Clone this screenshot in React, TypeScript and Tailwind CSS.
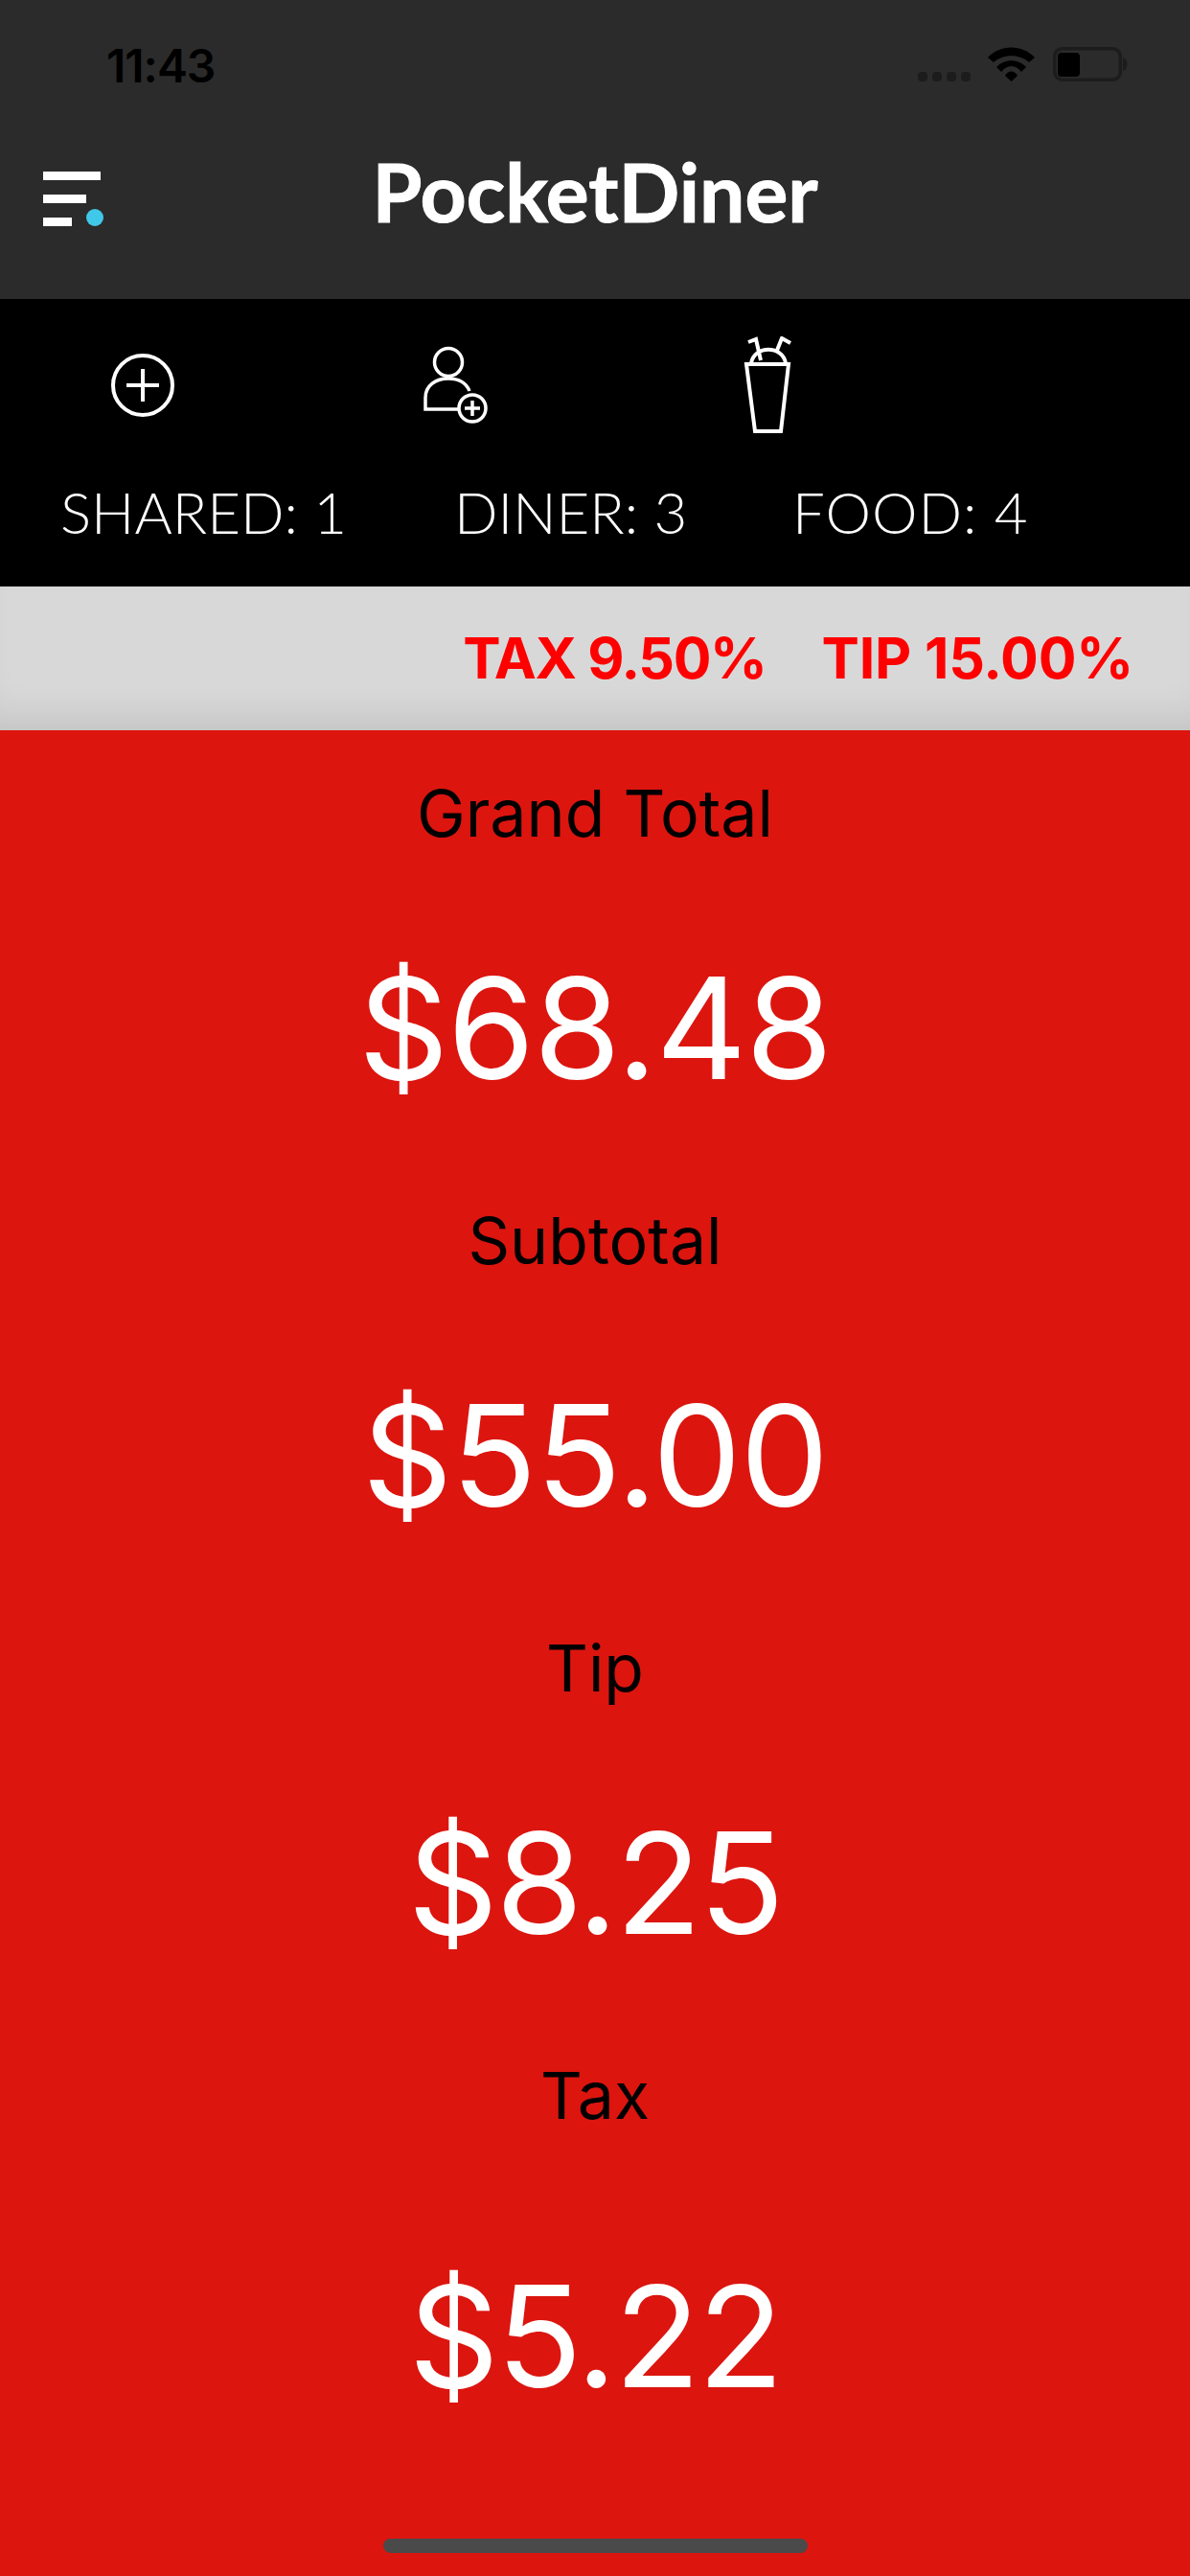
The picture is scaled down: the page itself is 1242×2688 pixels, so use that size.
import React from 'react'

const totals = [
  { label: 'Grand Total', value: '$68.48', valueClass: 'mt-[109px] tracking-[-1.2px]' },
  { label: 'Subtotal', value: '$55.00', valueClass: 'mt-[109px] tracking-[-1.2px]' },
  { label: 'Tip', value: '$8.25', valueClass: 'mt-[109px] tracking-[-2.5px]' },
  { label: 'Tax', value: '$5.22', valueClass: 'mt-[136px] tracking-[-2.5px]' }
]

function StatusIcons() {
  return (
    <svg width="240" height="40" viewBox="0 0 240 40" className="block">
      <g fill="#1c1c1c">
        <rect x="0" y="28" width="10" height="10" rx="4" />
        <rect x="15" y="28" width="10" height="10" rx="4" />
        <rect x="30" y="28" width="10" height="10" rx="4" />
        <rect x="45" y="28" width="10" height="10" rx="4" />
      </g>
      <path d="M73 13 C 86 -1, 109 -1, 122 13 L 116 18 C 106 9, 89 9, 79 18 Z" fill="#000" />
      <path d="M82 23 C 90 14, 105 14, 113 23 L 108 28 C 102 20, 93 20, 87 28 Z" fill="#000" />
      <path d="M91 32 C 94 26, 101 26, 104 32 L 97.5 38 Z" fill="#000" />
      <rect x="142.75" y="3.75" width="68.5" height="32.5" rx="8" fill="none" stroke="#1c1c1c" strokeWidth="3.5" />
      <rect x="146" y="8" width="23" height="25" rx="4" fill="#000" />
      <path d="M214 13 C 220 15, 220 25, 214 27 Z" fill="#1c1c1c" />
    </svg>
  )
}

function MenuIcon() {
  return (
    <svg width="64" height="66" viewBox="0 0 64 66" className="block">
      <rect x="0" y="0" width="60" height="9" fill="#fff" />
      <rect x="0" y="24" width="45" height="9" fill="#fff" />
      <rect x="0" y="48" width="30" height="9" fill="#fff" />
      <circle cx="54" cy="48" r="9" fill="#40c8e8" />
    </svg>
  )
}

function CirclePlusIcon() {
  return (
    <svg width="70" height="70" viewBox="0 0 70 70" className="block" fill="none" stroke="#fff" strokeWidth="4">
      <circle cx="35" cy="35" r="31" />
      <path d="M18 35 H52 M35 18 V52" />
    </svg>
  )
}

function PersonPlusIcon() {
  return (
    <svg width="72" height="84" viewBox="0 0 72 84" className="block" fill="none" stroke="#fff" strokeWidth="3.5">
      <circle cx="27" cy="17" r="14.5" />
      <path d="M38 66 H3 V54 C3 41 14 34 27 34 C38 34 46 39 49 47" />
      <circle cx="52" cy="65" r="14" />
      <path d="M44 65 H60 M52 57 V73" />
    </svg>
  )
}

function CupIcon() {
  return (
    <svg width="52" height="102" viewBox="0 0 52 102" className="block" fill="none" stroke="#fff" strokeWidth="4">
      <path d="M3 29 H47 L39 99 H12 Z" />
      <path d="M8 28 C11 9, 41 9, 44 28" />
      <path d="M18 25 L13 3 L5 6 M34 17 L40 2 L49 7" />
    </svg>
  )
}

export default function App() {
  return (
    <div className="relative flex h-[2688px] w-[1242px] flex-col overflow-hidden bg-[#dc150f]">
      <header className="h-[312px] bg-[#2b2b2b]">
        <div className="flex items-start justify-between pt-[47px] pl-[111px] pr-[44px]">
          <span className="font-['Inter',sans-serif] text-[48px] leading-[44px] font-semibold tracking-[-1px] text-black">11:43</span>
          <StatusIcons />
        </div>
        <div className="relative mt-[64px] flex h-[90px] items-center justify-center">
          <div className="absolute left-[45px] top-[24px]">
            <MenuIcon />
          </div>
          <h1 className="font-['Lato',sans-serif] text-[84px] leading-[90px] font-bold text-white [-webkit-text-stroke:1px_white]">PocketDiner</h1>
        </div>
      </header>

      <section className="h-[300px] bg-black">
        <div className="flex h-[150px] items-end">
          <div className="ml-[114px] mb-[25px]"><CirclePlusIcon /></div>
          <div className="ml-[257px] mb-[17px]"><PersonPlusIcon /></div>
          <div className="ml-[263px] mb-[9px]"><CupIcon /></div>
        </div>
        <div className="mt-[36px] flex font-['Lato',sans-serif] text-[60px] leading-[72px] font-light text-white">
          <span className="ml-[63px]">SHARED: 1</span>
          <span className="absolute left-[474px]">DINER: 3</span>
          <span className="absolute left-[827px] tracking-[1px]">FOOD: 4</span>
        </div>
      </section>

      <section className="flex h-[150px] items-center justify-end gap-[58px] bg-[#d8d8d8] pr-[59px] font-['Inter',sans-serif] text-[59px] font-bold text-[#ff0000] shadow-[inset_0_-36px_40px_-26px_rgba(0,0,0,0.11)]">
        <span className="tracking-[-1.4px]">TAX 9.50%</span>
        <span className="tracking-[-0.2px]">TIP 15.00%</span>
      </section>

      <main className="flex flex-col items-center font-['Inter',sans-serif]">
        {totals.map(({ label, value, valueClass }) => (
          <div key={label} className="flex h-[446px] w-full flex-col items-center">
            <div className="mt-[50px] text-[68px] leading-[72px] text-black">{label}</div>
            <div className={`${valueClass} text-[147px] leading-[160px] text-white`}>{value}</div>
          </div>
        ))}
      </main>

      <div className="absolute bottom-[24px] left-[400px] h-[15px] w-[443px] rounded-[8px] bg-[#4a4a4a]" />
    </div>
  )
}
